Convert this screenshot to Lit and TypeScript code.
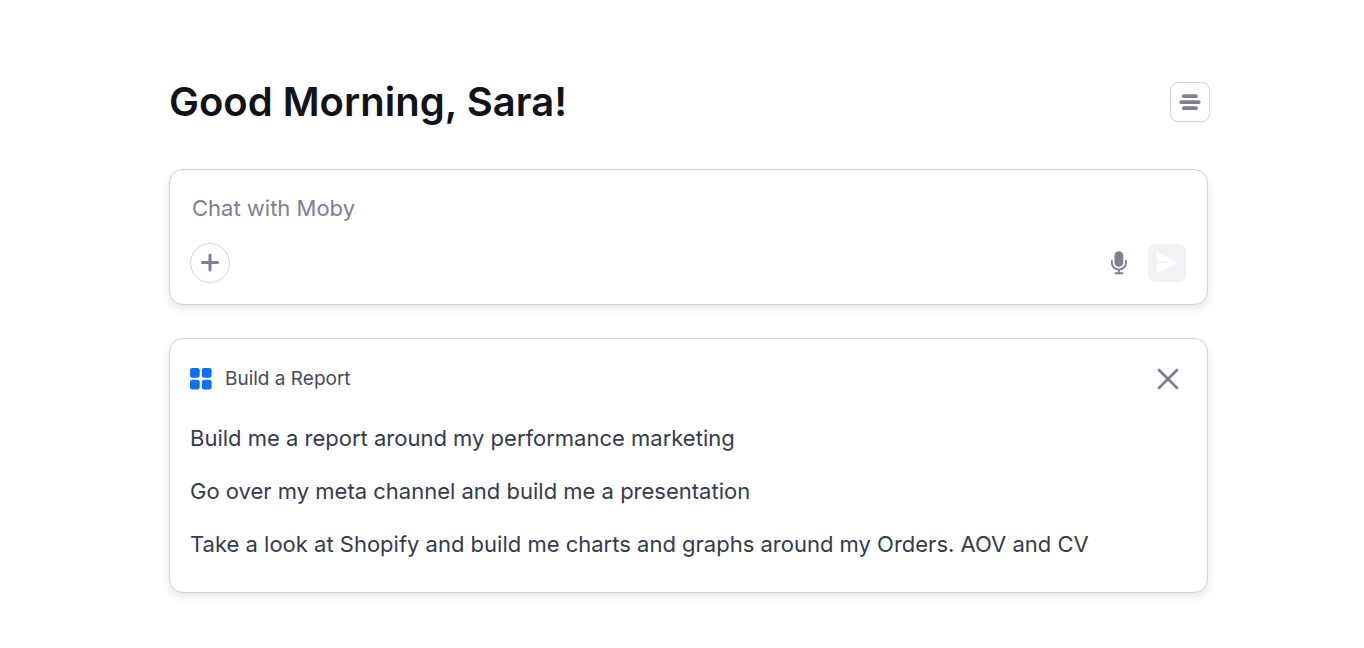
import { LitElement, html, css } from "lit";
import { customElement } from "lit/decorators.js";

const PROMPTS = [
  "Build me a report around my performance marketing",
  "Go over my meta channel and build me a presentation",
  "Take a look at Shopify and build me charts and graphs around my Orders. AOV and CV",
];

@customElement("app-root")
export class AppRoot extends LitElement {
  static styles = css`
    :host { display: block; min-height: 100vh; box-sizing: border-box; background: #fff; font-family: Inter, "Liberation Sans", sans-serif; color: #343b4d; padding: 76px 156px 48px 169px; }
    *, *::before { box-sizing: border-box; }
    button { font: inherit; color: inherit; background: none; border: 0; padding: 0; margin: 0; cursor: pointer; }
    svg { display: block; }
    .head { display: flex; align-items: center; justify-content: space-between; height: 52px; margin: 0 -2px 41px 0; }
    h1 { margin: 0; font-size: 40px; line-height: 52px; font-weight: 600; color: #10131a; }
    .menu { width: 40px; height: 40px; border: 1px solid #d1d1db; border-radius: 8px; display: grid; place-items: center; }
    .card { border: 1px solid #d0d1dd; border-radius: 14px; background: #fff; box-shadow: 0 4px 8px rgba(30, 32, 40, 0.11); padding: 20px 20px 21px; }
    .chat input { display: block; width: 100%; height: 36px; padding: 0 2px; border: 0; outline: 0; background: none; font-family: inherit; font-size: 22px; line-height: 36px; color: #343b4d; }
    .chat input::placeholder { color: #7b8092; opacity: 1; }
    .tools { display: flex; align-items: center; margin-top: 17px; height: 40px; }
    .add { width: 40px; height: 40px; border: 1px solid #d1d1db; border-radius: 50%; display: grid; place-items: center; margin-right: auto; }
    .mic { margin-right: 18px; }
    .send { width: 38px; height: 38px; border-radius: 8px; background: #f1f2f6; display: grid; place-items: center; margin-right: 1px; }
    .report { margin-top: 33px; }
    .top { display: flex; align-items: center; height: 40px; }
    h2 { margin: 0 auto 0 13px; font-size: 19px; line-height: 40px; font-weight: 400; color: #474b57; }
    .close { margin-right: 8px; }
    ul { list-style: none; margin: 13px 0 0; padding: 0; display: grid; }
    .prompt { display: block; width: 100%; text-align: left; font-size: 22px; line-height: 53px; font-weight: 400; }
  `;

  render() {
    return html`
      <main>
        <header class="head">
          <h1>Good Morning, Sara!</h1>
          <button class="menu" aria-label="Menu">
            <svg width="22" height="20" viewBox="0 0 22 20" fill="none" stroke="#7b8092" stroke-width="3.800" stroke-linecap="round"><path d="M4.800 4.200h12.200M2.300 10.200h17.400M4.800 16.200h12.200" /></svg>
          </button>
        </header>
        <form class="card chat" @submit=${(e: Event) => e.preventDefault()}>
          <input type="text" aria-label="Chat with Moby" placeholder="Chat with Moby" />
          <div class="tools">
            <button class="add" type="button" aria-label="Add">
              <svg width="20" height="20" viewBox="0 0 20 20" fill="none" stroke="#7b8092" stroke-width="3" stroke-linecap="round"><path d="M10 2v15M2.500 9.500h15" /></svg>
            </button>
            <button class="mic" type="button" aria-label="Record">
              <svg width="22" height="24" viewBox="0 0 22 24" fill="none"><rect x="6.500" y="0.200" width="8.800" height="15.600" rx="4.400" fill="#7b8092" /><path d="M3.800 9.800v1.700a7.100 7.100 0 0 0 14.200 0V9.800M10.900 18.600v3.600M7.400 22.200h7" stroke="#7b8092" stroke-width="1.900" stroke-linecap="round" /></svg>
            </button>
            <button class="send" aria-label="Send">
              <svg width="24" height="24" viewBox="0 0 24 24"><path d="M1 2.300Q1 .4 2.800 1.200L21.500 10.700Q23 11.500 21.500 12.300L2.800 21.800Q1 22.600 1.100 20.700L2.500 12.400V10.600Z" fill="#fff" /><path d="M2.500 11.500h10" stroke="#f1f2f6" stroke-width="1.400" stroke-linecap="round" /></svg>
            </button>
          </div>
        </form>
        <section class="card report">
          <div class="top">
            <svg width="22" height="22" viewBox="0 0 22 22" fill="#0c70f2"><rect width="9.700" height="9.700" rx="2.200" /><rect x="11.900" width="9.700" height="9.700" rx="2.200" /><rect y="11.700" width="9.700" height="9.700" rx="2.200" /><rect x="11.900" y="11.700" width="9.700" height="9.700" rx="2.200" /></svg>
            <h2>Build a Report</h2>
            <button class="close" aria-label="Close">
              <svg width="22" height="22" viewBox="0 0 22 22" fill="none" stroke="#7b8092" stroke-width="2.800" stroke-linecap="round"><path d="m2 2 18 18M20 2 2 20" /></svg>
            </button>
          </div>
          <ul>${PROMPTS.map((p) => html`<li><button class="prompt" type="button">${p}</button></li>`)}</ul>
        </section>
      </main>
    `;
  }
}
